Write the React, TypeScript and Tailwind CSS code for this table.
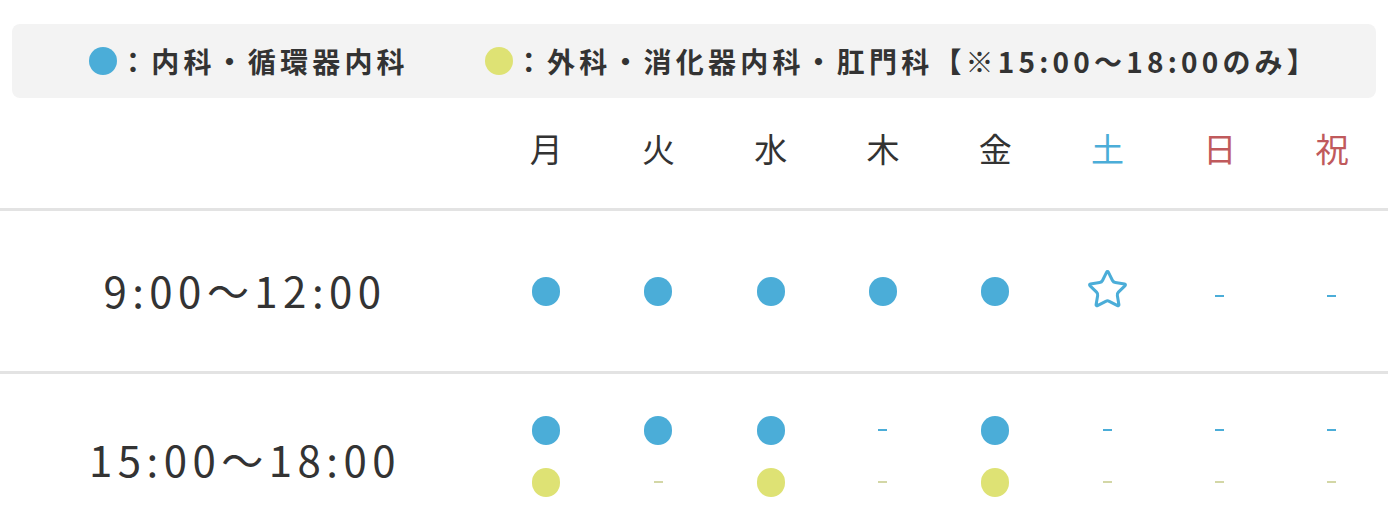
import { Star } from 'lucide-react'

type Mark = 'blue' | 'yellow' | 'star' | 'dashBlue' | 'dashYellow'

const DAYS = [
  { label: '月', color: 'text-[#333333]' },
  { label: '火', color: 'text-[#333333]' },
  { label: '水', color: 'text-[#333333]' },
  { label: '木', color: 'text-[#333333]' },
  { label: '金', color: 'text-[#333333]' },
  { label: '土', color: 'text-[#4badd8]' },
  { label: '日', color: 'text-[#c05a5c]' },
  { label: '祝', color: 'text-[#c05a5c]' },
]

const ROWS: { time: string; cells: Mark[][] }[] = [
  {
    time: '9:00～12:00',
    cells: [['blue'], ['blue'], ['blue'], ['blue'], ['blue'], ['star'], ['dashBlue'], ['dashBlue']],
  },
  {
    time: '15:00～18:00',
    cells: [
      ['blue', 'yellow'],
      ['blue', 'dashYellow'],
      ['blue', 'yellow'],
      ['dashBlue', 'dashYellow'],
      ['blue', 'yellow'],
      ['dashBlue', 'dashYellow'],
      ['dashBlue', 'dashYellow'],
      ['dashBlue', 'dashYellow'],
    ],
  },
]

function MarkIcon({ mark, single }: { mark: Mark; single: boolean }) {
  if (mark === 'blue') return <span className="block w-[28px] h-[29px] rounded-full bg-[#4badd8]" />
  if (mark === 'yellow') return <span className="block w-[28px] h-[29px] rounded-full bg-[#dee274]" />
  if (mark === 'star')
    return <Star size={43} strokeWidth={1.7} className="text-[#4badd8] -mt-[3px]" />
  return (
    <span className={`flex h-[29px] items-center ${single ? 'mt-[9px]' : ''}`}>
      <span
        className={`block w-[9px] h-[2px] ${mark === 'dashBlue' ? 'bg-[#4badd8]' : 'bg-[#d3d7a6]'}`}
      />
    </span>
  )
}

export default function App() {
  return (
    <div
      className="w-[1388px] h-[529px] overflow-hidden bg-white text-[#333333]"
      style={{ fontFamily: '"Noto Sans CJK JP", "Noto Sans", sans-serif' }}
    >
      {/* Legend */}
      <div className="px-3 pt-6">
        <div className="h-[74px] pl-[20px] rounded-lg bg-[#f3f3f3] flex items-center justify-center gap-[76px] font-bold text-[28px] tracking-[0.15em]">
          <div className="flex items-center">
            <span className="block w-[28px] h-[28px] rounded-full bg-[#4badd8]" />
            <span className="ml-[2px]">：内科・循環器内科</span>
          </div>
          <div className="flex items-center">
            <span className="block w-[28px] h-[28px] rounded-full bg-[#dee274]" />
            <span className="ml-[2px]">：外科・消化器内科・肛門科【※15:00～18:00のみ】</span>
          </div>
        </div>
      </div>

      {/* Header */}
      <div className="grid grid-cols-[490px_repeat(8,1fr)] h-[113px] items-center pb-2 border-b-[3px] border-[#e3e3e3]">
        <div />
        {DAYS.map(d => (
          <div key={d.label} className={`text-center text-[33px] ${d.color}`}>
            {d.label}
          </div>
        ))}
      </div>

      {/* Rows */}
      {ROWS.map((row, i) => (
        <div
          key={row.time}
          className={`grid grid-cols-[490px_repeat(8,1fr)] items-center ${
            i === 0 ? 'h-[163px] border-b-[3px] border-[#e3e3e3]' : 'h-[160px] pt-1'
          }`}
        >
          <div className={`text-center text-[42px] tracking-[0.13em] ${i === 1 ? 'mt-1' : '-mt-1'}`}>
            {row.time}
          </div>
          {row.cells.map((marks, j) => (
            <div key={j} className="flex flex-col items-center gap-[23px]">
              {marks.map((m, k) => (
                <MarkIcon key={k} mark={m} single={marks.length === 1} />
              ))}
            </div>
          ))}
        </div>
      ))}
    </div>
  )
}
